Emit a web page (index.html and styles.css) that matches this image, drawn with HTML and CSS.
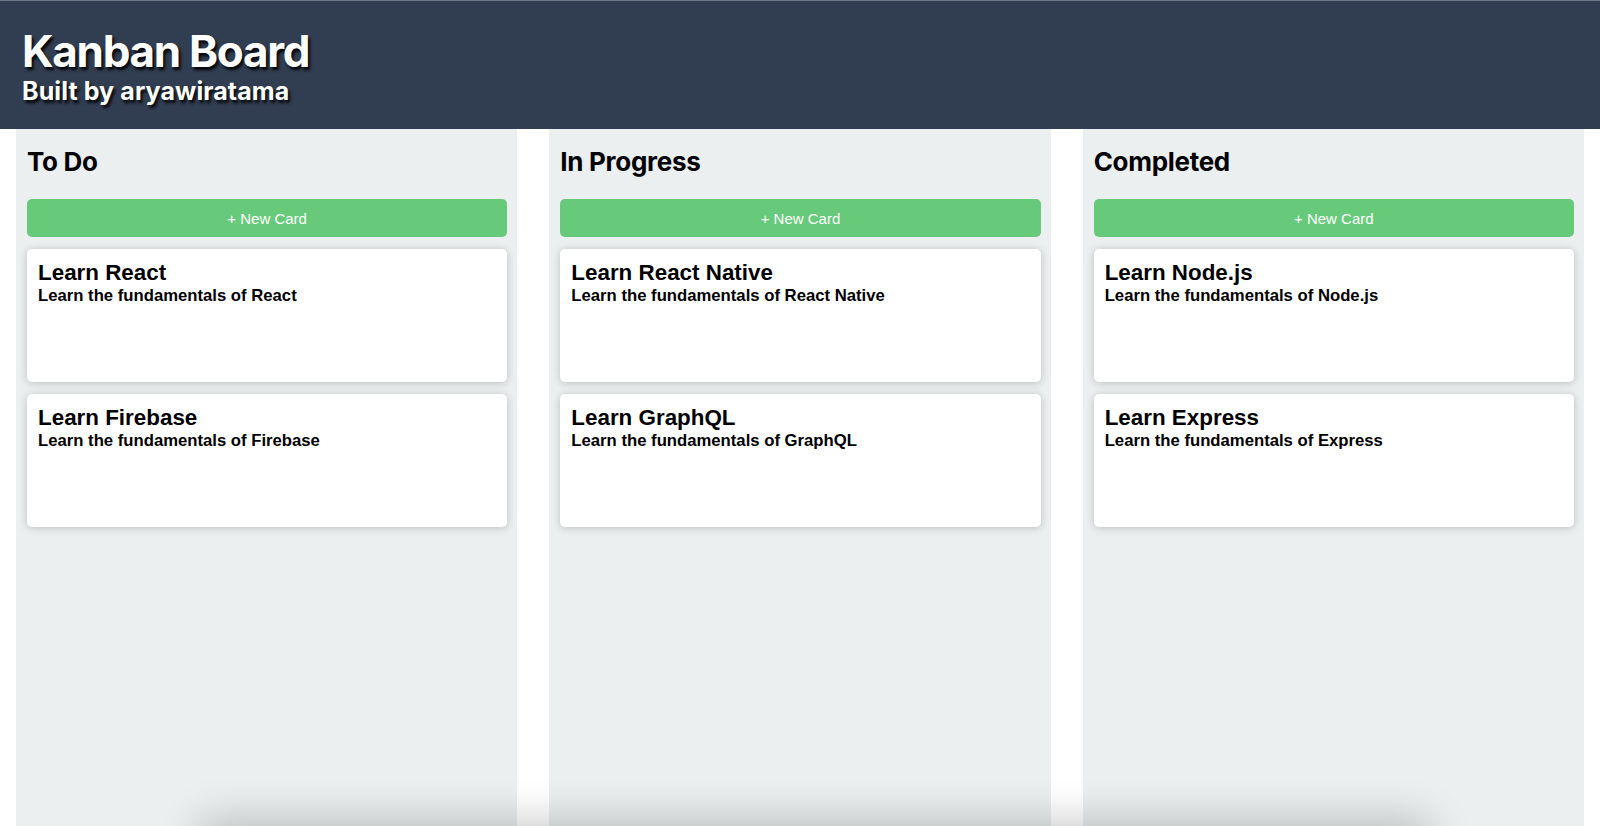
FILE: index.html
```html
<!DOCTYPE html>
<html lang="en">
<head>
<meta charset="utf-8">
<title>Kanban Board</title>
<link rel="stylesheet" href="styles.css">
</head>
<body>
<header class="app-header">
  <h1 class="app-title">Kanban Board</h1>
  <p class="app-subtitle">Built by aryawiratama</p>
</header>
<main class="board">
  <section class="column">
    <h2 class="column-title">To Do</h2>
    <button class="new-card">+ New Card</button>
    <div class="card-list">
      <article class="card">
        <h3 class="card-title">Learn React</h3>
        <p class="card-desc">Learn the fundamentals of React</p>
      </article>
      <article class="card">
        <h3 class="card-title">Learn Firebase</h3>
        <p class="card-desc">Learn the fundamentals of Firebase</p>
      </article>
    </div>
  </section>
  <section class="column">
    <h2 class="column-title">In Progress</h2>
    <button class="new-card">+ New Card</button>
    <div class="card-list">
      <article class="card">
        <h3 class="card-title">Learn React Native</h3>
        <p class="card-desc">Learn the fundamentals of React Native</p>
      </article>
      <article class="card">
        <h3 class="card-title">Learn GraphQL</h3>
        <p class="card-desc">Learn the fundamentals of GraphQL</p>
      </article>
    </div>
  </section>
  <section class="column">
    <h2 class="column-title">Completed</h2>
    <button class="new-card">+ New Card</button>
    <div class="card-list">
      <article class="card">
        <h3 class="card-title">Learn Node.js</h3>
        <p class="card-desc">Learn the fundamentals of Node.js</p>
      </article>
      <article class="card">
        <h3 class="card-title">Learn Express</h3>
        <p class="card-desc">Learn the fundamentals of Express</p>
      </article>
    </div>
  </section>
</main>
<div class="bottom-shade"></div>
</body>
</html>
```
FILE: styles.css
```css
* { box-sizing: border-box; }

html, body {
  margin: 0;
  padding: 0;
  background: #ffffff;
  height: 100%;
}

body {
  font-family: Inter, "Noto Sans", sans-serif;
  overflow: hidden;
}

.app-header {
  background: #313d50;
  border-top: 1px solid #6f7987;
  padding: 28px 22px 26px;
  height: 129px;
  color: #ffffff;
}

.app-title {
  margin: 0;
  font-size: 44px;
  line-height: 44px;
  font-weight: 700;
  letter-spacing: -1.3px;
  text-shadow: 2px 3px 3px rgba(0, 0, 0, 0.9);
}

.app-subtitle {
  margin: 6px 0 0;
  font-size: 25px;
  line-height: 25px;
  font-weight: 700;
  letter-spacing: 0.1px;
  text-shadow: 2px 3px 3px rgba(0, 0, 0, 0.9);
}

.board {
  display: flex;
  gap: 32px;
  padding: 0 16px;
  height: calc(100% - 129px);
}

.column {
  flex: 1 1 0;
  min-width: 0;
  background: #ebeff0;
  padding: 11px 10px 11px 11px;
  display: flex;
  flex-direction: column;
}

.column-title {
  margin: 6px 0 22px 0;
  font-size: 26px;
  line-height: 31px;
  font-weight: 700;
  letter-spacing: -0.3px;
  color: #000;
}

.new-card {
  display: block;
  width: 100%;
  height: 38px;
  border: none;
  border-radius: 5px;
  background: #66ca7a;
  color: #ffffff;
  font-family: "Liberation Sans", Arial, sans-serif;
  font-size: 15px;
  margin: 0 0 12px;
  padding: 0;
}

.card-list {
  display: flex;
  flex-direction: column;
  gap: 12px;
}

.card {
  background: #ffffff;
  border-radius: 5px;
  height: 133px;
  padding: 11px 10px 10px 11px;
  box-shadow: 0 1px 8px rgba(0, 0, 0, 0.2);
  font-family: "Liberation Sans", Arial, sans-serif;
  color: #000;
}

.card-title {
  margin: 0;
  font-size: 22.4px;
  line-height: 25px;
  font-weight: 700;
}

.card-desc {
  margin: 1px 0 0;
  font-size: 16.7px;
  line-height: 19px;
  font-weight: 700;
}

.bottom-shade {
  position: fixed;
  left: 200px;
  right: 170px;
  bottom: -40px;
  height: 40px;
  box-shadow: 0 -6px 40px rgba(0, 0, 0, 0.22);
  pointer-events: none;
}
```
